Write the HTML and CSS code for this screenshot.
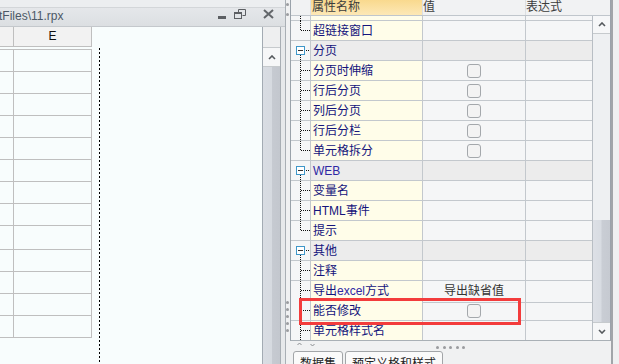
FILE: index.html
```html
<!DOCTYPE html>
<html lang="zh-CN">
<head>
    <meta charset="UTF-8">
    <meta name="viewport" content="width=device-width, initial-scale=1.0">
    <title>报表设计</title>
    <link rel="stylesheet" href="styles.css">
</head>
<body>
<div class="app">
    <section class="doc">
        <div class="doc-top"></div>
        <div class="doc-title">
            <span class="doc-name">tFiles\11.rpx</span>
            <svg class="wb wb-min" width="9" height="10" viewBox="0 0 9 10"><rect x="0" y="7" width="8" height="3" fill="#5c5f63"/></svg>
            <svg class="wb wb-restore" width="12" height="10" viewBox="0 0 12 10">
                <path d="M4.5 3.5V0.5h7v6h-3" fill="none" stroke="#5c5f63"/>
                <rect x="0.5" y="3.5" width="7" height="6" fill="none" stroke="#5c5f63"/>
                <rect x="0" y="3" width="8" height="2" fill="#5c5f63"/>
            </svg>
            <svg class="wb wb-close" width="11" height="10" viewBox="0 0 11 10"><path d="M1 1l9 8M10 1l-9 8" stroke="#62666a" stroke-width="2"/></svg>
        </div>
        <div class="doc-body">
            <div class="sheet">
                <div class="sheet-head"><div class="hc"></div><div class="hc">E</div></div>
                <div class="sheet-main">
                    <div class="cells">
                        <div class="srow"><div></div><div></div></div>
                        <div class="srow"><div></div><div></div></div>
                        <div class="srow"><div></div><div></div></div>
                        <div class="srow"><div></div><div></div></div>
                        <div class="srow"><div></div><div></div></div>
                        <div class="srow"><div></div><div></div></div>
                        <div class="srow"><div></div><div></div></div>
                        <div class="srow"><div></div><div></div></div>
                        <div class="srow tall"><div></div><div></div></div>
                        <div class="srow"><div></div><div></div></div>
                        <div class="srow"><div></div><div></div></div>
                        <div class="srow"><div></div><div></div></div>
                        <div class="srow"><div></div><div></div></div>
                    </div>
                    <div class="page-break"></div>
                </div>
            </div>
            <div class="vscroll doc-scroll">
                <div class="vs-corner"></div>
                <div class="vs-btn"><svg width="8" height="5" viewBox="0 0 8 5"><path d="M1 4l3-3 3 3" fill="none" stroke="#55595d" stroke-width="1.6"/></svg></div>
                <div class="vs-track"></div>
            </div>
            <div class="doc-edge"></div>
        </div>
    </section>

    <section class="props">
        <div class="grip">
            <i></i><i></i>
            <div class="grip-low"><i></i><i></i><i></i><i></i><i></i></div>
        </div>
        <div class="prop-main">
            <div class="pgrid">
                <div class="pg-head">
                    <div class="ph ph-gut"></div>
                    <div class="ph ph-name">属性名称</div>
                    <div class="ph">值</div>
                    <div class="ph ph-expr">表达式</div>
                </div>
                <div class="pg-body">
                    <div class="pg-rows">
                        <div class="prow part"><div class="gut mid"></div><div class="nm"></div><div class="vl"></div><div class="ex"></div></div>
                        <div class="prow"><div class="gut last"></div><div class="nm">超链接窗口</div><div class="vl"></div><div class="ex"></div></div>
                        <div class="prow cat"><div class="gut open"><b class="tbox"></b></div><div class="nm">分页</div><div class="vl"></div><div class="ex"></div></div>
                        <div class="prow"><div class="gut mid"></div><div class="nm">分页时伸缩</div><div class="vl"><span class="cb"></span></div><div class="ex"></div></div>
                        <div class="prow"><div class="gut mid"></div><div class="nm">行后分页</div><div class="vl"><span class="cb"></span></div><div class="ex"></div></div>
                        <div class="prow"><div class="gut mid"></div><div class="nm">列后分页</div><div class="vl"><span class="cb"></span></div><div class="ex"></div></div>
                        <div class="prow"><div class="gut mid"></div><div class="nm">行后分栏</div><div class="vl"><span class="cb"></span></div><div class="ex"></div></div>
                        <div class="prow"><div class="gut last"></div><div class="nm">单元格拆分</div><div class="vl"><span class="cb"></span></div><div class="ex"></div></div>
                        <div class="prow cat"><div class="gut open"><b class="tbox"></b></div><div class="nm latin">WEB</div><div class="vl"></div><div class="ex"></div></div>
                        <div class="prow"><div class="gut mid"></div><div class="nm">变量名</div><div class="vl"></div><div class="ex"></div></div>
                        <div class="prow"><div class="gut mid"></div><div class="nm">HTML事件</div><div class="vl"></div><div class="ex"></div></div>
                        <div class="prow"><div class="gut last"></div><div class="nm">提示</div><div class="vl"></div><div class="ex"></div></div>
                        <div class="prow cat"><div class="gut open"><b class="tbox"></b></div><div class="nm">其他</div><div class="vl"></div><div class="ex"></div></div>
                        <div class="prow"><div class="gut mid"></div><div class="nm">注释</div><div class="vl"></div><div class="ex"></div></div>
                        <div class="prow"><div class="gut mid"></div><div class="nm">导出<span class="latin">excel</span>方式</div><div class="vl txt">导出缺省值</div><div class="ex"></div></div>
                        <div class="prow"><div class="gut mid"></div><div class="nm">能否修改</div><div class="vl"><span class="cb"></span></div><div class="ex"></div></div>
                        <div class="prow"><div class="gut mid"></div><div class="nm">单元格样式名</div><div class="vl"></div><div class="ex"></div></div>
                    </div>
                    <div class="vscroll pg-scroll">
                        <div class="vs-btn"><svg width="8" height="5" viewBox="0 0 8 5"><path d="M1 4l3-3 3 3" fill="none" stroke="#55595d" stroke-width="1.6"/></svg></div>
                        <div class="vs-track light"></div>
                        <div class="vs-thumb"></div>
                        <div class="vs-btn down"><svg width="8" height="5" viewBox="0 0 8 5"><path d="M1 1l3 3 3-3" fill="none" stroke="#55595d" stroke-width="1.6"/></svg></div>
                    </div>
                </div>
            </div>
            <div class="prop-foot">
                <div class="foot-bar">
                    <svg class="mini" width="5" height="4" viewBox="0 0 5 4"><path d="M0.5 3l2-2 2 2" fill="none" stroke="#8a8d90"/></svg>
                    <svg class="mini" width="5" height="4" viewBox="0 0 5 4"><path d="M0.5 1l2 2 2-2" fill="none" stroke="#8a8d90"/></svg>
                    <div class="fdots"><i></i><i></i><i></i><i></i><i></i></div>
                </div>
                <div class="tabs">
                    <div class="tab">数据集</div>
                    <div class="tab">预定义格和样式</div>
                </div>
            </div>
        </div>
        <div class="prop-edge"></div>
    </section>

    <div class="mark"></div>
</div>
</body>
</html>
```

FILE: styles.css
```css
* {
    box-sizing: border-box;
}

body {
    margin: 0;
    width: 619px;
    height: 364px;
    overflow: hidden;
    font-family: "Liberation Sans", "Noto Sans CJK SC", sans-serif;
    font-size: 12px;
    background: #f0f1f2;
}

.app {
    position: relative;
    display: flex;
    height: 364px;
}

/* ---------- left document window ---------- */

.doc {
    width: 286px;
    display: flex;
    flex-direction: column;
    border-right: 1px solid #a9afb5;
}

.doc-top {
    height: 8px;
    background: #eceef0;
    border-bottom: 1px solid #d3d6d9;
}

.doc-title {
    height: 19px;
    display: flex;
    align-items: flex-start;
    background: linear-gradient(#e5e7ea, #dcdfe2);
    border-bottom: 1px solid #c4c8cc;
    padding-right: 11px;
}

.doc-name {
    margin-left: -1px;
    line-height: 16px;
    color: #4b5866;
    white-space: nowrap;
}

.wb {
    display: block;
    margin-top: 1px;
}

.wb-min {
    margin-left: auto;
}

.wb-restore {
    margin-left: 7px;
}

.wb-close {
    margin-left: 17px;
}

.doc-body {
    flex: 1;
    display: flex;
    min-height: 0;
}

.sheet {
    flex: 1;
    background: #f8fdfd;
    display: flex;
    flex-direction: column;
}

.sheet-head {
    display: grid;
    grid-template-columns: 14px 78px;
    height: 20px;
}

.hc {
    background: #f2f2f2;
    border-right: 1px solid #bfbfbf;
    border-bottom: 1px solid #bfbfbf;
    text-align: center;
    line-height: 19px;
    color: #111;
}

.sheet-main {
    flex: 1;
    display: flex;
    align-items: flex-start;
    padding-top: 2px;
}

.cells {
    width: 92px;
    border-top: 1px solid #bfbfbf;
}

.srow {
    display: grid;
    grid-template-columns: 14px 78px;
    height: 22px;
}

.srow.tall {
    height: 24px;
}

.srow div {
    border-right: 1px solid #bfbfbf;
    border-bottom: 1px solid #bfbfbf;
}

.page-break {
    align-self: stretch;
    width: 1px;
    margin: -1px 0 0 7px;
    background: repeating-linear-gradient(to bottom, #000 0 2px, transparent 2px 4px);
}

.doc-edge {
    width: 4px;
    background: #e7e9eb;
}

/* ---------- scrollbars ---------- */

.vscroll {
    display: flex;
    flex-direction: column;
}

.doc-scroll {
    width: 19px;
    border-left: 1px solid #a3abb3;
    border-right: 1px solid #a8aeb4;
}

.vs-corner {
    height: 20px;
    background: #eeeff0;
}

.vs-btn {
    height: 20px;
    display: flex;
    align-items: center;
    justify-content: center;
    background: #f6f7f8;
    border-top: 1px solid #c6cacd;
    border-bottom: 1px solid #c6cacd;
}

.vs-track {
    flex: 1;
    background: linear-gradient(to right, #d9dde3 0, #d6dae0 50%, #c6cad1 55%, #c3c7ce 100%);
}

.vs-track.light {
    background: #eef0f2;
}

.pg-scroll {
    width: 18px;
    border-left: 1px solid #b8bec4;
}

.pg-scroll .vs-btn {
    height: 18px;
    border-top: 0;
}

.pg-scroll .vs-btn.down {
    border-top: 1px solid #c6cacd;
    border-bottom: 0;
}

.vs-thumb {
    height: 102px;
    background: linear-gradient(to right, #dde0e6 0, #d8dce2 45%, #c9cdd4 55%, #c6cad1 100%);
}

/* ---------- property panel ---------- */

.props {
    flex: 1;
    display: flex;
}

.grip {
    width: 4px;
    padding-top: 3px;
    background: #f0f1f2;
}

.grip i,
.fdots i {
    display: block;
    width: 3px;
    height: 3px;
    border-radius: 50%;
    background: #9a9c9f;
}

.grip > i + i {
    margin-top: 7px;
}

.grip-low {
    margin-top: 285px;
    display: flex;
    flex-direction: column;
    gap: 4px;
}

.prop-main {
    width: 321px;
    display: flex;
    flex-direction: column;
}

.pgrid {
    height: 341px;
    border-left: 1px solid #9aa2aa;
    border-right: 1px solid #9aa2aa;
    border-bottom: 1px solid #a9b0b6;
    background: #f5f6f7;
    font-family: "Liberation Sans", "Noto Sans CJK SC", sans-serif;
}

.pg-head {
    display: grid;
    grid-template-columns: 20px 112px 103px 1fr;
    height: 16px;
    border-bottom: 1px solid #c0c6cc;
    background: #f1f2f3;
    color: #3c3c3c;
    line-height: 15px;
}

.ph {
    border-right: 1px solid #dcdfe2;
    white-space: nowrap;
    overflow: hidden;
}

.ph-name {
    padding-left: 1px;
    background: linear-gradient(#f9d98e, #fde8b6);
}

.ph-expr {
    border-right: 0;
}

.pg-body {
    display: flex;
    height: 324px;
}

.pg-rows {
    width: 301px;
    overflow: hidden;
}

.prow {
    display: grid;
    grid-template-columns: 20px 112px 103px 66px;
    height: 20px;
}

.prow > div {
    border-bottom: 1px solid #c3c8cd;
    border-right: 1px solid #c3c8cd;
}

.prow > .ex {
    border-right: 0;
}

.prow.part {
    height: 5px;
}

.gut {
    position: relative;
    background: #f5f6f7;
}

.nm {
    background: #fffde9;
    color: #14147c;
    padding-left: 2px;
    line-height: 21px;
    white-space: nowrap;
    overflow: hidden;
}

.latin {
    color: #2e28a4;
}

.vl {
    display: flex;
    align-items: center;
    justify-content: center;
}

.vl.txt {
    color: #333;
    line-height: 21px;
}

.cat .nm,
.cat .vl,
.cat .ex {
    background: #ececec;
}

.cb {
    display: block;
    width: 14px;
    height: 14px;
    border: 1px solid #a4a8ac;
    border-radius: 3px;
    background: #f3f3f3;
}

/* tree connector lines */
.gut.mid::before,
.gut.last::before,
.gut.open::before {
    content: "";
    position: absolute;
    left: 9px;
    top: 0;
    width: 1px;
    height: 20px;
    background: repeating-linear-gradient(to bottom, #111 0 1px, transparent 1px 2px);
}

.gut.last::before {
    height: 10px;
}

.gut.open::before {
    top: 14px;
    height: 6px;
}

.gut.mid::after,
.gut.last::after,
.gut.open::after {
    content: "";
    position: absolute;
    left: 10px;
    top: 9px;
    width: 9px;
    height: 1px;
    background: repeating-linear-gradient(to right, #111 0 1px, transparent 1px 2px);
}

.gut.open::after {
    left: 15px;
    width: 4px;
}

.part .gut.mid::before {
    height: 5px;
}

.part .gut.mid::after {
    display: none;
}

.tbox {
    position: absolute;
    left: 5px;
    top: 5px;
    width: 9px;
    height: 9px;
    border: 1px solid #3f97c9;
    background: #fff;
    z-index: 1;
}

.tbox::after {
    content: "";
    position: absolute;
    left: 1px;
    top: 3px;
    width: 5px;
    height: 1px;
    background: #333;
}

.prop-foot {
    flex: 1;
    background: #f0f1f2;
}

.foot-bar {
    height: 10px;
    display: flex;
    align-items: flex-start;
    padding-left: 7px;
}

.mini {
    display: block;
    margin-top: 1px;
}

.mini + .mini {
    margin-left: 8px;
    margin-top: 2px;
}

.fdots {
    display: flex;
    gap: 3.5px;
    margin-left: 121px;
    margin-top: 5px;
}

.tabs {
    display: flex;
    gap: 2px;
    padding-left: 3px;
}

.tab {
    height: 20px;
    padding: 3px 6px 0;
    border: 1px solid #a2a5a8;
    border-radius: 3px 3px 0 0;
    background: #fafafa;
    color: #222;
    font-family: "Noto Sans CJK SC", sans-serif;
    font-size: 12px;
    line-height: 16px;
}

.prop-edge {
    width: 8px;
    border-left: 2px solid #a1a5a9;
    background: #eff0f1;
}

/* highlight drawn over the grid */
.mark {
    position: absolute;
    left: 299px;
    top: 298px;
    width: 222px;
    height: 27px;
    border: 3px solid #f33c3c;
}
```
